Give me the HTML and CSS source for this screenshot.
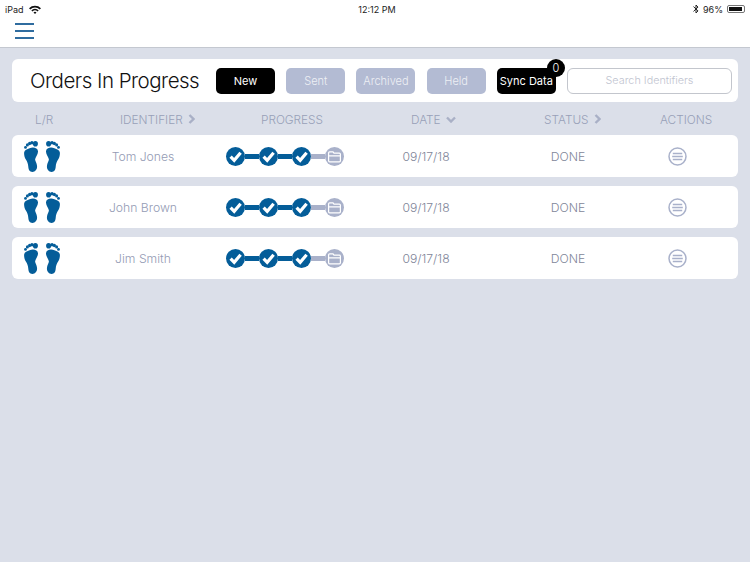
FILE: index.html
```html
<!DOCTYPE html>
<html lang="en">
<head>
    <meta charset="UTF-8">
    <meta name="viewport" content="width=device-width, initial-scale=1.0">
    <title>Orders In Progress</title>
    <link rel="stylesheet" href="styles.css">
</head>
<body>
    <svg class="defs" width="0" height="0">
        <symbol id="foot" viewBox="0 0 15 32" preserveAspectRatio="none">
            <path d="M6 7.4C10 5.9 14.7 7 15 10.5C15.2 13.5 12.8 16 12 18.5C11.4 20.5 13.8 22.5 14 26C14.2 29.5 12 31.9 9 31.9C6 31.9 4.8 29.5 4.6 26.5C4.4 23.5 3.4 21.4 2 19.2C0.6 17 -0.2 14 0.2 11.5C0.6 9 3.4 8.4 6 7.4Z"/>
            <circle cx="1.6" cy="6.6" r="1.5"/>
            <circle cx="3.6" cy="4" r="1.6"/>
            <circle cx="6" cy="2.6" r="1.7"/>
            <circle cx="8.5" cy="1.9" r="1.8"/>
            <ellipse cx="12.2" cy="2.9" rx="2.7" ry="2.9"/>
        </symbol>
        <symbol id="check" viewBox="0 0 19 19">
            <circle cx="9.5" cy="9.5" r="9.5" fill="#045d99"/>
            <path d="M4.6 9.6L8.2 13.4L14.6 5.8" fill="none" stroke="#fff" stroke-width="3.2"/>
        </symbol>
        <symbol id="folder" viewBox="0 0 19 19">
            <circle cx="9.5" cy="9.5" r="9.5" fill="#a9b1ca"/>
            <path d="M3.6 6.2V13.8Q3.6 14.8 4.6 14.8H14.4Q15.4 14.8 15.4 13.8V7.2Q15.4 6.2 14.4 6.2H9L8 4.8H4.6Q3.6 4.8 3.6 5.8ZM3.6 8.8H15.4" fill="none" stroke="#fff" stroke-width="1.2"/>
        </symbol>
        <symbol id="menu" viewBox="0 0 19 19">
            <circle cx="9.5" cy="9.5" r="8.5" fill="none" stroke="#a9b1ca" stroke-width="1.5"/>
            <path d="M4.8 6.4H14.2M4.2 9.5H14.8M4.8 12.6H14.2" fill="none" stroke="#a9b1ca" stroke-width="1.5"/>
        </symbol>
    </svg>

    <header class="top">
        <div class="status-bar">
            <div class="status-left">
                <span>iPad</span>
                <svg class="wifi" width="12" height="9" viewBox="0 0 12 9">
                    <path d="M0 3.2A8.5 8.5 0 0 1 12 3.2L10.7 4.5A6.6 6.6 0 0 0 1.3 4.5Z"/>
                    <path d="M2.3 5.4A5.2 5.2 0 0 1 9.7 5.4L8.5 6.6A3.5 3.5 0 0 0 3.5 6.6Z"/>
                    <path d="M4.5 7.5A2.1 2.1 0 0 1 7.5 7.5L6 9Z"/>
                </svg>
            </div>
            <div class="status-time">12:12 PM</div>
            <div class="status-right">
                <svg class="bt" width="6" height="10" viewBox="0 0 6 10">
                    <path d="M0.5 2.6L5 6.9L3 9V1L5 3.1L0.5 7.4" fill="none" stroke="#222" stroke-width="1"/>
                </svg>
                <span>96%</span>
                <div class="battery"><div class="battery-fill"></div></div>
            </div>
        </div>
        <div class="nav-bar">
            <button class="hamburger" aria-label="Menu"><span></span><span></span><span></span></button>
        </div>
    </header>

    <main class="content">
        <section class="toolbar">
            <h1>Orders In Progress</h1>
            <div class="toolbar-actions">
                <button class="btn btn-dark">New</button>
                <button class="btn">Sent</button>
                <button class="btn">Archived</button>
                <button class="btn">Held</button>
                <button class="btn btn-dark btn-sync">Sync Data<span class="badge">0</span></button>
                <input class="search" type="text" placeholder="Search Identifiers">
            </div>
        </section>

        <div class="table-head">
            <div>L/R</div>
            <div>IDENTIFIER <svg class="chev" viewBox="0 0 7 10"><path d="M1.5 1L5.5 5L1.5 9"/></svg></div>
            <div>PROGRESS</div>
            <div>DATE <svg class="chev chev-down" viewBox="0 0 10 7"><path d="M1 1.5L5 5.5L9 1.5"/></svg></div>
            <div>STATUS <svg class="chev" viewBox="0 0 7 10"><path d="M1.5 1L5.5 5L1.5 9"/></svg></div>
            <div>ACTIONS</div>
        </div>

        <div class="rows">
            <div class="row">
                <div class="feet">
                    <svg class="foot"><use href="#foot"/></svg>
                    <svg class="foot foot-right"><use href="#foot"/></svg>
                </div>
                <div class="name">Tom Jones</div>
                <div class="progress">
                    <svg class="step"><use href="#check"/></svg><i class="link"></i>
                    <svg class="step"><use href="#check"/></svg><i class="link"></i>
                    <svg class="step"><use href="#check"/></svg><i class="link link-off"></i>
                    <svg class="step"><use href="#folder"/></svg>
                </div>
                <div>09/17/18</div>
                <div>DONE</div>
                <div class="action"><svg class="step"><use href="#menu"/></svg></div>
            </div>
            <div class="row">
                <div class="feet">
                    <svg class="foot"><use href="#foot"/></svg>
                    <svg class="foot foot-right"><use href="#foot"/></svg>
                </div>
                <div class="name">John Brown</div>
                <div class="progress">
                    <svg class="step"><use href="#check"/></svg><i class="link"></i>
                    <svg class="step"><use href="#check"/></svg><i class="link"></i>
                    <svg class="step"><use href="#check"/></svg><i class="link link-off"></i>
                    <svg class="step"><use href="#folder"/></svg>
                </div>
                <div>09/17/18</div>
                <div>DONE</div>
                <div class="action"><svg class="step"><use href="#menu"/></svg></div>
            </div>
            <div class="row">
                <div class="feet">
                    <svg class="foot"><use href="#foot"/></svg>
                    <svg class="foot foot-right"><use href="#foot"/></svg>
                </div>
                <div class="name">Jim Smith</div>
                <div class="progress">
                    <svg class="step"><use href="#check"/></svg><i class="link"></i>
                    <svg class="step"><use href="#check"/></svg><i class="link"></i>
                    <svg class="step"><use href="#check"/></svg><i class="link link-off"></i>
                    <svg class="step"><use href="#folder"/></svg>
                </div>
                <div>09/17/18</div>
                <div>DONE</div>
                <div class="action"><svg class="step"><use href="#menu"/></svg></div>
            </div>
        </div>
    </main>
</body>
</html>
```

FILE: styles.css
```css
* {
    margin: 0;
    padding: 0;
    box-sizing: border-box;
    font-family: Inter, 'Liberation Sans', sans-serif;
}

body {
    background: #dbdfe9;
    height: 562px;
    overflow: hidden;
}

.defs {
    position: absolute;
}

.top {
    background: white;
    height: 48px;
    border-bottom: 1px solid #c4c8d0;
}

.status-bar {
    height: 18px;
    padding: 0 5px;
    display: grid;
    grid-template-columns: 1fr auto 1fr;
    align-items: center;
    font-size: 9px;
    color: #222;
}

.status-left {
    display: flex;
    align-items: center;
    gap: 5px;
}

.status-time {
    padding-left: 4px;
}

.status-right {
    display: flex;
    align-items: center;
    justify-content: flex-end;
    gap: 4px;
}

.wifi {
    fill: #111;
}

.battery {
    width: 18px;
    height: 8px;
    border: 1px solid #777;
    border-radius: 2px;
    padding: 1px;
}

.battery-fill {
    height: 100%;
    width: 96%;
    background: #111;
}

.nav-bar {
    padding: 5px 15px;
}

.hamburger {
    display: flex;
    flex-direction: column;
    gap: 5.5px;
    width: 19px;
    background: none;
    border: none;
}

.hamburger span {
    height: 1.5px;
    background: #2f6c9f;
}

.content {
    padding: 11px 12px;
}

.toolbar {
    height: 43px;
    background: white;
    border-radius: 6px;
    display: flex;
    align-items: center;
    padding: 0 6px 0 18px;
    justify-content: space-between;
}

h1 {
    font-size: 20.5px;
    font-weight: 300;
    letter-spacing: -0.5px;
    white-space: nowrap;
    color: #111;
}

.toolbar-actions {
    display: flex;
    align-items: center;
    gap: 11.2px;
}

.btn {
    width: 59px;
    height: 26px;
    border: none;
    border-radius: 5px;
    background: #b3bbd3;
    color: #eef0f5;
    font-size: 11px;
    font-weight: 300;
    position: relative;
}

.btn-dark {
    background: black;
    color: white;
    font-weight: 400;
}

.badge {
    position: absolute;
    top: -9px;
    right: -9px;
    width: 18px;
    height: 18px;
    border-radius: 50%;
    background: black;
    color: white;
    font-size: 11px;
    font-weight: 300;
    line-height: 18px;
    text-align: center;
}

.search {
    width: 165px;
    height: 26px;
    border: 1px solid #c3c6cd;
    border-radius: 6px;
    text-align: center;
    font-size: 10.8px;
    font-weight: 300;
    outline: none;
}

.search::placeholder {
    color: #bfc4d0;
}

.table-head {
    display: grid;
    grid-template-columns: 85px 141px 150px 133px 116px 1fr;
    padding-left: 23px;
    margin-top: 11px;
    height: 22px;
    font-size: 11.8px;
    font-weight: 300;
    line-height: 15px;
    color: #989fb8;
}

.chev {
    width: 7px;
    height: 10px;
    margin-left: 2px;
    fill: none;
    stroke: #a9b0c6;
    stroke-width: 2.4;
}

.chev-down {
    width: 10px;
    height: 7px;
    margin-bottom: 1px;
}

.rows {
    display: flex;
    flex-direction: column;
    gap: 9px;
}

.row {
    height: 42px;
    background: white;
    border-radius: 6px;
    display: grid;
    grid-template-columns: 60px 142px 142px 140px 144px 74px;
    align-items: center;
    justify-items: center;
    font-size: 12.2px;
    font-weight: 300;
    color: #7f8699;
}

.name {
    color: #949bb4;
}

.feet {
    display: flex;
    gap: 8px;
}

.foot {
    width: 14px;
    height: 31px;
    fill: #045d99;
}

.foot-right {
    transform: scaleX(-1);
}

.progress {
    display: flex;
    align-items: center;
}

.step {
    width: 19px;
    height: 19px;
}

.link {
    width: 14px;
    height: 5px;
    background: #045d99;
}

.link-off {
    background: #a9b1ca;
}

.action {
    display: flex;
}
```
